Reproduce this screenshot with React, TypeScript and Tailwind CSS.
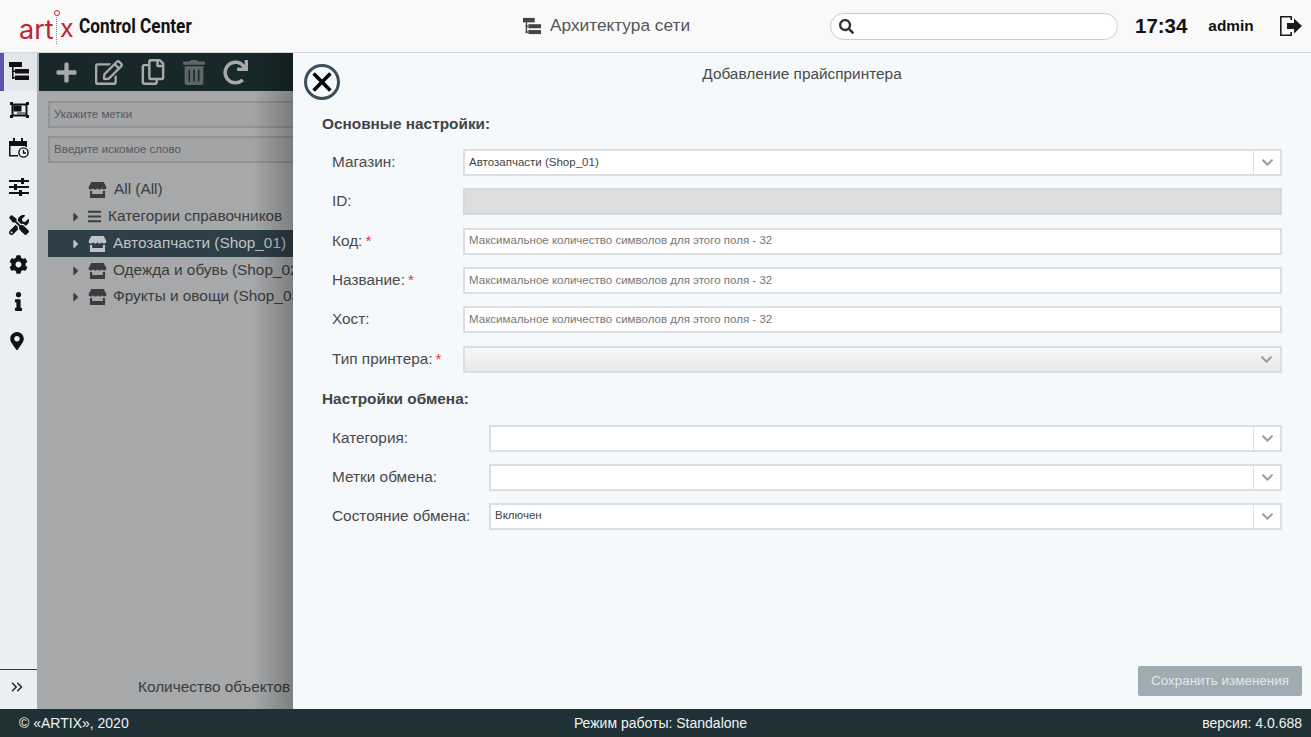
import { FaCaretRight, FaBars, FaChevronDown, FaCog, FaInfo, FaMapMarkerAlt, FaPlus, FaRedo, FaRegCopy, FaRegEdit, FaSearch, FaTools, FaTrashAlt } from "react-icons/fa";
import { ChevronsRight } from "lucide-react";

const font = "font-['Liberation_Sans',Arial,sans-serif]";

function TreeIcon({ className }: { className: string }) {
  return (
    <svg viewBox="0 0 20 20" className={className} fill="currentColor">
      <rect x="0" y="1" width="13" height="5" />
      <rect x="3" y="6" width="1.6" height="12" />
      <rect x="6" y="8" width="14" height="4.5" />
      <rect x="6" y="14.5" width="14" height="4.5" />
      <rect x="3" y="9.5" width="3" height="1.5" />
      <rect x="3" y="16" width="3" height="1.5" />
    </svg>
  );
}

function FrameIcon() {
  return (
    <svg viewBox="0 0 19 16" className="h-[16px] w-[19px]" fill="currentColor">
      <path d="M1.500 1.500h16v13h-16z M3.500 3.500v9h12v-9z" fillRule="evenodd" />
      <rect x="0" y="0" width="3" height="3" />
      <rect x="16" y="0" width="3" height="3" />
      <rect x="0" y="13" width="3" height="3" />
      <rect x="16" y="13" width="3" height="3" />
      <rect x="3.500" y="3.500" width="8" height="6" />
      <rect x="7" y="10" width="8.500" height="2.500" opacity="0.5" />
    </svg>
  );
}

function CalendarIcon() {
  return (
    <svg viewBox="0 0 20 20" className="h-5 w-5">
      <path d="M0 3h4V0h2v3h6V0h2v3h4v6h-1.500V8H1.500v9H9v1.500H0z" fill="currentColor" />
      <rect x="1.500" y="3.500" width="15" height="3.500" fill="currentColor" />
      <circle cx="14.500" cy="14.500" r="4.600" fill="#ebeff3" stroke="currentColor" strokeWidth="1.400" />
      <path d="M14.500 12v3h2.500" fill="none" stroke="currentColor" strokeWidth="1.300" />
    </svg>
  );
}

function SlidersIcon() {
  return (
    <svg viewBox="0 0 20 18" className="h-[18px] w-5" fill="currentColor">
      <rect x="0" y="2" width="20" height="2" />
      <rect x="0" y="8" width="20" height="2" />
      <rect x="0" y="14" width="20" height="2" />
      <rect x="12" y="0" width="3" height="6" />
      <rect x="5" y="6" width="3" height="6" />
      <rect x="10" y="12" width="3" height="6" />
    </svg>
  );
}

function StoreIcon({ className }: { className?: string }) {
  return (
    <svg viewBox="0 0 20 18" className={`h-[16px] w-[19px] shrink-0 ${className ?? ""}`} fill="currentColor">
      <path d="M3 0h14l3 6c0 1.600-1 2.500-2.500 2.500S15 7.600 15 6.500c0 1.100-1.200 2-2.500 2S10 7.600 10 6.500c0 1.100-1.200 2-2.500 2S5 7.600 5 6.500C5 7.600 4 8.500 2.500 8.500S0 7.600 0 6z" />
      <path d="M1.500 10H4v3.500h12V10h2.500v8h-17z" />
    </svg>
  );
}

function ExitIcon() {
  return (
    <svg viewBox="0 0 24 22" className="h-[22px] w-6 text-[#1b1b1b]" fill="currentColor">
      <path d="M1 1h12v4h-1.600V2.600H2.600v16.800h8.800V17H13v4H1z" />
      <path d="M8 8h7V3.500L23 11l-8 7.500V14H8z" />
    </svg>
  );
}

function Logo() {
  return (
    <div className="relative h-[41px] w-[60px] shrink-0">
      <span className="absolute left-0 top-[10px] font-['Inter',sans-serif] text-[27px] leading-none text-[#c4202f]">art</span>
      <span className="absolute left-[34.500px] top-[4px] h-[6px] w-[6px] rounded-full border border-[#c4202f]" />
      <span className="absolute left-[37px] top-[11px] h-[27px] w-px border-l border-dotted border-[#d8606c]" />
      <span className="absolute left-[41px] top-[10px] font-['Inter',sans-serif] text-[25px] leading-none text-[#c4202f]">x</span>
    </div>
  );
}

function Field({ label, required, width, children }: { label: string; required?: boolean; width: string; children: React.ReactNode }) {
  return (
    <div className="flex h-[27px] items-center">
      <div className={`${width} shrink-0 pb-[2px] text-[15.36px] text-[#4a4a4a]`}>
        {label}
        {required && <span className="ml-[3px] text-[#e53935]">*</span>}
      </div>
      <div className="min-w-0 flex-1">{children}</div>
    </div>
  );
}

function TextInput({ placeholder }: { placeholder: string }) {
  return (
    <div className="flex h-[27px] items-center border-2 border-[#dcdee0] bg-white px-[4px] text-[11.52px] text-[#777]">{placeholder}</div>
  );
}

function Select({ value, gradient }: { value?: string; gradient?: boolean }) {
  return (
    <div className={`flex h-[27px] items-center border-2 border-[#dcdee0] text-[11.52px] text-[#444] ${gradient ? "bg-gradient-to-b from-[#f7f7f7] to-[#e8e8e8]" : "bg-white"}`}>
      <div className="flex-1 px-[4px]">{value}</div>
      <div className={`flex h-full w-[27px] items-center justify-center ${gradient ? "" : "border-l border-[#dfe1e3]"}`}>
        <FaChevronDown className="h-[13px] w-[13px] text-[#9c9c9c]" />
      </div>
    </div>
  );
}

function Caret() {
  return <FaCaretRight className="h-[14px] w-[8px] shrink-0" />;
}

const placeholder = "Максимальное количество символов для этого поля - 32";

export default function App() {
  return (
    <div className={`${font} flex h-[737px] w-[1311px] flex-col overflow-hidden bg-white`}>
      <header className="flex h-[53px] shrink-0 items-center border-b border-[#d5d8da] bg-[#f9f9fa]">
        <div className="ml-[19px] flex w-[180px] items-center">
          <Logo />
          <span className="origin-left scale-x-[0.82] pt-[2px] font-['Roboto',sans-serif] text-[21px] font-bold whitespace-nowrap text-[#111]">Control Center</span>
        </div>
        <div className="ml-[324px] flex w-[307px] items-center text-[17.28px] text-[#555]">
          <TreeIcon className="mr-[9px] h-[18px] w-[18px] text-[#444]" />
          Архитектура сети
        </div>
        <div className="flex h-[27px] w-[288px] items-center rounded-full border border-[#ccc] bg-white pl-[8px]">
          <FaSearch className="h-[15px] w-[15px] text-[#333]" />
        </div>
        <div className="ml-[17px] text-[20.48px] font-bold text-[#111]">17:34</div>
        <div className="ml-[21px] text-[15.36px] font-bold text-[#111]">admin</div>
        <div className="ml-[25px]"><ExitIcon /></div>
      </header>

      <div className="relative flex min-h-0 flex-1">
        <aside className="flex w-[39px] shrink-0 flex-col items-center border-r-2 border-[#a9abad] bg-[#ebeff3] text-[#111]">
          <div className="flex h-[38px] w-full items-center justify-center border-l-[4px] border-[#5a55ab] bg-[#e3e6ea] pr-[3px] pb-[2px]">
            <TreeIcon className="h-5 w-5" />
          </div>
          <div className="flex h-[38px] items-center justify-center pl-[1px]"><FrameIcon /></div>
          <div className="flex h-[38px] items-center justify-center pl-[1px]"><CalendarIcon /></div>
          <div className="flex h-[39px] items-center justify-center"><SlidersIcon /></div>
          <div className="flex h-[38px] items-center justify-center"><FaTools className="h-5 w-5" /></div>
          <div className="flex h-[39px] items-center justify-center pt-[1px]"><FaCog className="h-[19px] w-[19px]" /></div>
          <div className="flex h-[38px] items-center justify-center"><FaInfo className="mb-[2px] h-[19px] w-[19px]" /></div>
          <div className="flex h-[39px] items-center justify-center pr-[3px]"><FaMapMarkerAlt className="h-[18px] w-[18px]" /></div>
          <div className="mt-auto flex h-[40px] w-full items-center justify-center border-t border-[#30383c] pr-[3px] pb-[5px]">
            <ChevronsRight className="h-[18px] w-[18px] text-[#222]" strokeWidth={2} />
          </div>
        </aside>

        <main className="relative flex w-[254px] shrink-0 flex-col overflow-hidden bg-[#a6a8aa] text-[#3a3c3e]">
          <div className="flex h-[38px] items-center gap-[18px] bg-[#18282a] pl-[16px] text-[#a8aaaa]">
            <FaPlus className="h-[23px] w-[23px]" />
            <FaRegEdit className="-ml-[1px] h-[27px] w-[28px]" />
            <FaRegCopy className="h-[26px] w-[24px]" />
            <FaTrashAlt className="h-[25px] w-[22px] text-[#5f6768]" />
            <FaRedo className="h-[25px] w-[25px]" />
          </div>
          <div className="ml-[9px] mt-[10px] flex h-[27px] w-[300px] items-center border-2 border-[#909294] bg-[#a2a4a6] px-[4px] text-[11.52px] text-[#59595b]">Укажите метки</div>
          <div className="ml-[9px] mt-[8px] flex h-[27px] w-[300px] items-center border-2 border-[#909294] bg-[#a2a4a6] px-[4px] text-[11.52px] text-[#59595b]">Введите искомое слово</div>
          <div className="mt-[6px] pt-[7px] text-[15.36px] whitespace-nowrap">
            <div className="flex h-[27px] items-center pl-[49px]"><StoreIcon /><span className="ml-[7px] pb-[2px]">All (All)</span></div>
            <div className="flex h-[27px] items-center pl-[33px]">
              <Caret />
              <FaBars className="ml-[7px] h-[15px] w-[15px] shrink-0" />
              <span className="ml-[6px] pb-[2px]">Категории справочников</span>
            </div>
            <div className="ml-[9px] flex h-[27px] items-center bg-[#2e3f47] pl-[24px] text-[#c0c3c5]">
              <Caret />
              <StoreIcon className="ml-[8px]" />
              <span className="ml-[6px] pb-[2px]">Автозапчасти (Shop_01)</span>
            </div>
            <div className="flex h-[27px] items-center pl-[33px]">
              <Caret />
              <StoreIcon className="ml-[8px]" />
              <span className="ml-[6px] pb-[2px]">Одежда и обувь (Shop_02)</span>
            </div>
            <div className="flex h-[26px] items-center pl-[33px]">
              <Caret />
              <StoreIcon className="ml-[8px]" />
              <span className="ml-[6px] pb-[2px]">Фрукты и овощи (Shop_03)</span>
            </div>
          </div>
          <div className="mt-auto mb-[11px] pl-[99px] text-[15.36px] whitespace-nowrap">Количество объектов</div>
          <div className="pointer-events-none absolute inset-y-0 right-0 w-[40px] bg-gradient-to-r from-transparent to-black/25" />
        </main>

        <section className="flex min-w-0 flex-1 flex-col bg-[#f5f9fc] pl-[29px] pr-[29px]">
          <div className="relative h-[43px] pt-[12px] text-center text-[15.36px] leading-[18px] text-[#4a4a4a]">
            <button className="absolute left-[-18px] top-[11px] flex h-[36px] w-[36px] items-center justify-center rounded-full border-[3px] border-[#3b4f5a] bg-[#f5f9fc]">
              <svg viewBox="0 0 20 20" className="h-[24px] w-[24px]" fill="none" stroke="#000" strokeWidth="3"><path d="M3 3l14 14M17 3L3 17" /></svg>
            </button>
            <span>Добавление прайспринтера</span>
          </div>
          <div className="mt-[16px] text-[15.36px] font-bold text-[#444]">Основные настройки:</div>
          <div className="mt-[14px] flex flex-col gap-[12.3px] pl-[10px]">
            <Field label="Магазин:" width="w-[131px]"><Select value="Автозапчасти (Shop_01)" /></Field>
            <Field label="ID:" width="w-[131px]"><div className="h-[27px] border-2 border-[#d6d8da] bg-[#dddddd]" /></Field>
            <Field label="Код:" required width="w-[131px]"><TextInput placeholder={placeholder} /></Field>
            <Field label="Название:" required width="w-[131px]"><TextInput placeholder={placeholder} /></Field>
            <Field label="Хост:" width="w-[131px]"><TextInput placeholder={placeholder} /></Field>
            <Field label="Тип принтера:" required width="w-[131px]"><Select gradient /></Field>
          </div>
          <div className="mt-[14px] text-[15.36px] font-bold text-[#444]">Настройки обмена:</div>
          <div className="mt-[15px] flex flex-col gap-[12px] pl-[10px]">
            <Field label="Категория:" width="w-[157px]"><Select /></Field>
            <Field label="Метки обмена:" width="w-[157px]"><Select /></Field>
            <Field label="Состояние обмена:" width="w-[157px]"><Select value="Включен" /></Field>
          </div>
          <div className="mt-auto mb-[13px] flex justify-end">
            <button className="mr-[-20px] flex h-[30px] w-[164px] items-center justify-center rounded-[2px] bg-[#a0abb2] text-[13.44px] text-[#e3e7ea]">Сохранить изменения</button>
          </div>
        </section>
      </div>

      <footer className="flex h-[28px] shrink-0 items-center justify-between bg-[#203135] pl-[19px] pr-[9px] text-[14px] text-[#f1f3f4]">
        <span className="w-[300px]">© «ARTIX», 2020</span>
        <span>Режим работы: Standalone</span>
        <span className="w-[300px] text-right">версия: 4.0.688</span>
      </footer>
    </div>
  );
}
